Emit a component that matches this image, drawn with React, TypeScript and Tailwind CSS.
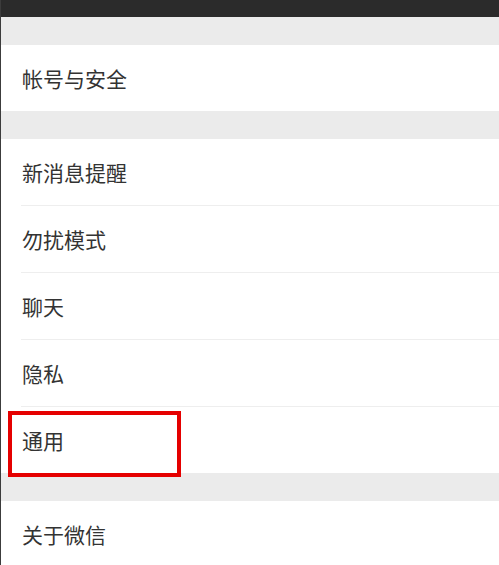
import React from 'react';

type Row = { label: string; highlight?: boolean };

const groupOne: Row[] = [{ label: '帐号与安全' }];
const groupTwo: Row[] = [
  { label: '新消息提醒' },
  { label: '勿扰模式' },
  { label: '聊天' },
  { label: '隐私' },
  { label: '通用', highlight: true },
];
const groupThree: Row[] = [{ label: '关于微信' }];

const SettingsGroup = ({ rows }: { rows: Row[] }) => (
  <div className="bg-white">
    {rows.map((row, index) => (
      <div key={row.label}>
        {index > 0 && <div className="ml-[20px] h-px bg-[#eeeeee]" />}
        <div className="relative flex h-[66px] items-center pl-[21px]">
          <span className="text-[21px] leading-none text-[#333333]">{row.label}</span>
          {row.highlight && (
            <div className="absolute left-[7px] top-[4px] z-10 h-[66px] w-[173px] border-4 border-[#e50000]" />
          )}
        </div>
      </div>
    ))}
  </div>
);

export default function App() {
  return (
    <div
      className="h-[565px] w-[499px] overflow-hidden border-l border-[#3c3c3c] bg-white"
      style={{ fontFamily: '"Noto Sans CJK SC", "Noto Sans", sans-serif' }}
    >
      <div className="h-[17px] bg-[#2b2b2b]" />
      <div className="h-[28px] bg-[#ebebeb]" />
      <SettingsGroup rows={groupOne} />
      <div className="h-[28px] bg-[#ebebeb]" />
      <SettingsGroup rows={groupTwo} />
      <div className="h-[28px] bg-[#ebebeb]" />
      <SettingsGroup rows={groupThree} />
    </div>
  );
}
